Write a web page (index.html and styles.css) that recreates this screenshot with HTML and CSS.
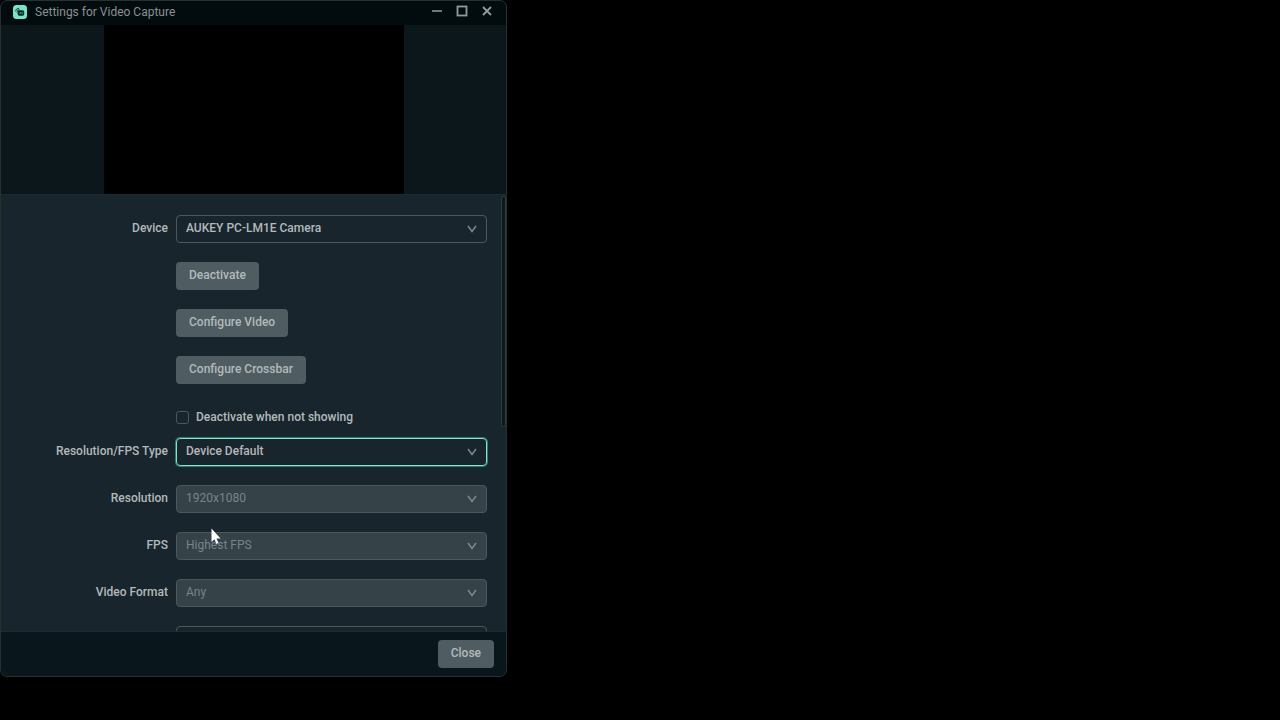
FILE: index.html
```html
<!DOCTYPE html>
<html lang="en">
  <head>
    <meta charset="UTF-8" />
    <meta name="viewport" content="width=device-width, initial-scale=1.0" />
    <title>Settings for Video Capture</title>
    <link rel="stylesheet" href="styles.css">
  </head>
  <body>
    <svg class="sprite" aria-hidden="true">
      <symbol id="chevron" viewBox="0 0 10 8">
        <path d="M1 1l4 5.500L9 1" fill="none" stroke="currentColor" stroke-width="1.500" />
      </symbol>
    </svg>
    <main class="window">
      <header class="titlebar">
        <svg class="logo" viewBox="0 0 14 14" aria-hidden="true">
          <rect width="14" height="14" rx="3.5" fill="#74e8c4" />
          <path d="M2.4 6a3.600 3.600 0 0 1 3.400-2.800M3.900 6.800a2.400 2.400 0 0 1 2.200-2.200" fill="none" stroke="#123a35" stroke-width="0.9" stroke-linecap="round" />
          <rect x="4.6" y="5.3" width="6.6" height="5.4" rx="1.600" fill="#0c2a27" />
          <path d="M7.2 7.5v1.2M9.1 7.5v1.2" stroke="#5cc4a6" stroke-width="0.8" stroke-linecap="round" />
        </svg>
        <h1>Settings for Video Capture</h1>
        <div class="window-controls">
          <button type="button" aria-label="Minimize">
            <svg viewBox="0 0 12 12"><path d="M1 6h10" stroke="currentColor" stroke-width="1.600" /></svg>
          </button>
          <button type="button" aria-label="Maximize">
            <svg viewBox="0 0 12 12"><rect x="1.500" y="1.500" width="9" height="9" fill="none" stroke="currentColor" stroke-width="1.800" /></svg>
          </button>
          <button type="button" aria-label="Close window">
            <svg viewBox="0 0 12 12"><path d="M2 2l8 8M10 2l-8 8" stroke="currentColor" stroke-width="1.800" /></svg>
          </button>
        </div>
      </header>

      <div class="preview">
        <div class="preview-video"></div>
      </div>

      <section class="content">
        <form class="settings">
          <div class="row">
            <label for="device">Device</label>
            <div class="select">
              <select id="device"><option>AUKEY PC-LM1E Camera</option></select>
              <svg><use href="#chevron" /></svg>
            </div>
          </div>
          <div class="row">
            <button type="button" class="button">Deactivate</button>
          </div>
          <div class="row">
            <button type="button" class="button">Configure Video</button>
          </div>
          <div class="row">
            <button type="button" class="button">Configure Crossbar</button>
          </div>
          <div class="row row-checkbox">
            <div class="checkbox">
              <input type="checkbox" id="deactivate" />
              <label for="deactivate">Deactivate when not showing</label>
            </div>
          </div>
          <div class="row">
            <label for="type">Resolution/FPS Type</label>
            <div class="select active">
              <select id="type"><option>Device Default</option></select>
              <svg><use href="#chevron" /></svg>
            </div>
          </div>
          <div class="row">
            <label for="resolution">Resolution</label>
            <div class="select">
              <select id="resolution" disabled><option>1920x1080</option></select>
              <svg><use href="#chevron" /></svg>
            </div>
          </div>
          <div class="row">
            <label for="fps">FPS</label>
            <div class="select">
              <select id="fps" disabled><option>Highest FPS</option></select>
              <svg><use href="#chevron" /></svg>
            </div>
          </div>
          <div class="row">
            <label for="format">Video Format</label>
            <div class="select">
              <select id="format" disabled><option>Any</option></select>
              <svg><use href="#chevron" /></svg>
            </div>
          </div>
          <div class="row">
            <div class="select">
              <select aria-label="Color Space"></select>
            </div>
          </div>
        </form>
        <div class="scrollbar"></div>
      </section>

      <footer class="footer">
        <button type="button" class="button">Close</button>
      </footer>
    </main>

    <svg class="cursor" viewBox="0 0 10 17" aria-hidden="true">
      <path d="M0.500 0.500v13.500l3-2.800 2 4.800 2-0.900-2-4.600h4z" fill="#fff" />
    </svg>
  </body>
</html>
```

FILE: styles.css
```css
* {
  box-sizing: border-box;
}
body {
  margin: 0;
  background-color: #000;
  color: #b3b9ba;
  font-family: Roboto, sans-serif;
  font-size: 12px;
  font-weight: 500;
  line-height: 16px;
}
button,
select {
  font: inherit;
  color: inherit;
}
.sprite {
  display: none;
}
.window {
  display: flex;
  flex-direction: column;
  width: 100%;
  max-width: 507px;
  height: 94vh;
  border: 1px solid #25302f;
  border-radius: 7px;
  background-color: #19252c;
  overflow: hidden;
}

/* title bar */
.titlebar {
  display: flex;
  flex: none;
  align-items: center;
  height: 24px;
  padding: 0 12px 2px;
  background-color: #020c0f;
}
.logo {
  width: 14px;
  height: 14px;
}
.titlebar h1 {
  flex: 1;
  margin: 0 0 0 8px;
  color: #8b9092;
  font-size: 12px;
  font-weight: 400;
}
.window-controls {
  display: flex;
  gap: 13px;
  margin-right: 1px;
}
.window-controls button {
  display: flex;
  padding: 0 0 2px;
  border: none;
  background: none;
  color: #949a9c;
}
.window-controls svg {
  width: 12px;
  height: 12px;
}

/* preview */
.preview {
  display: flex;
  flex: none;
  justify-content: center;
  background-color: #0c171c;
}
.preview-video {
  width: 300px;
  aspect-ratio: 16 / 9;
  background-color: #000;
}

/* form */
.content {
  position: relative;
  flex: 1;
  min-height: 0;
  border-top: 1px solid #1d2b32;
  overflow: hidden;
}
.settings {
  display: flex;
  flex-direction: column;
  gap: 19px;
  padding: 20px 19px 20px 20px;
}
.row {
  display: grid;
  grid-template-columns: 147px 1fr;
  column-gap: 8px;
  align-items: center;
  min-height: 28px;
}
.row > label {
  text-align: right;
  padding-bottom: 1px;
}
.row > div,
.row > button {
  grid-column: 2;
}
.row-checkbox {
  margin-bottom: -12px;
}
.select {
  position: relative;
}
.select select {
  display: block;
  width: 100%;
  height: 28px;
  padding: 0 28px 2px 9px;
  border: 1px solid #4a575d;
  border-radius: 4px;
  background-color: transparent;
  appearance: none;
  outline: none;
}
.select select:disabled {
  background-color: #354248;
  color: #78848a;
  font-weight: 400;
  opacity: 1;
}
.select.active select {
  border-color: #80e5c8;
  box-shadow: 0 0 0 1px #2f7b69;
}
.select svg {
  position: absolute;
  top: 10px;
  right: 10px;
  width: 10px;
  height: 8px;
  color: #7d888b;
  pointer-events: none;
}
.button {
  justify-self: start;
  height: 28px;
  padding: 0 13px 2px;
  border: none;
  border-radius: 4px;
  background-color: #4f5d62;
  cursor: pointer;
}
.checkbox {
  display: flex;
  align-items: center;
  gap: 7px;
  padding-top: 1px;
}
.checkbox input {
  width: 13px;
  height: 13px;
  margin: 0;
  border: 1px solid #4a575d;
  border-radius: 3px;
  appearance: none;
}
.scrollbar {
  position: absolute;
  top: 1px;
  right: 0;
  width: 5px;
  height: 53%;
  border: 1px solid #2d3d40;
  border-radius: 3px;
  background-color: #0e191d;
}

/* footer */
.footer {
  display: flex;
  flex: none;
  justify-content: flex-end;
  padding: 8px 12px;
  border-top: 1px solid #1d2b32;
  background-color: #09161c;
}

.cursor {
  position: absolute;
  top: 528px;
  left: 211px;
  width: 10px;
  height: 17px;
}
```
